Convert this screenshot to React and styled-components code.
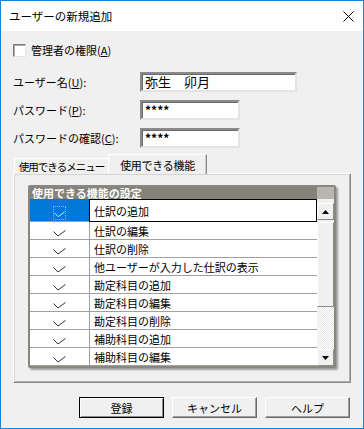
import styled, { createGlobalStyle } from "styled-components";

const GlobalStyle = createGlobalStyle`
  html, body {
    margin: 0;
    padding: 0;
    background: #ffffff;
  }
  * {
    box-sizing: border-box;
  }
`;

const FONT = `"Noto Sans CJK JP", "Noto Sans", sans-serif`;

const rows = [
  "仕訳の追加",
  "仕訳の編集",
  "仕訳の削除",
  "他ユーザーが入力した仕訳の表示",
  "勘定科目の追加",
  "勘定科目の編集",
  "勘定科目の削除",
  "補助科目の追加",
  "補助科目の編集",
];

const Window = styled.div`
  width: 364px;
  height: 429px;
  border: 1px solid #1883d7;
  display: flex;
  flex-direction: column;
  font-family: ${FONT};
  font-size: 11px;
  color: #000;
  background: #f0f0f0;
`;

const TitleBar = styled.div`
  height: 30px;
  background: #ffffff;
  display: flex;
  align-items: center;
  justify-content: space-between;
  padding: 0 8px 0 8px;
  font-size: 11.5px;
  flex-shrink: 0;
`;

const CloseIcon = styled.svg`
  width: 11px;
  height: 11px;
  margin-right: 1px;
`;

const Body = styled.div`
  flex: 1;
  display: flex;
  flex-direction: column;
  padding: 12px 12px 10px 12px;
`;

const CheckRow = styled.label`
  display: flex;
  align-items: center;
  height: 14px;
  gap: 5px;
  line-height: 14px;
`;

const CheckBox = styled.span`
  width: 13px;
  height: 13px;
  background: #fff;
  border: 1px solid;
  border-color: #7a7a7a #e3e3e3 #e3e3e3 #7a7a7a;
  box-shadow: inset 1px 1px 0 #a8a8a8;
`;

const Form = styled.div`
  display: flex;
  flex-direction: column;
  gap: 8px;
  margin-top: 15px;
`;

const FieldRow = styled.div`
  display: grid;
  grid-template-columns: 127px auto;
  align-items: center;
  height: 20px;
`;

const Label = styled.span`
  line-height: 14px;
`;

const TextBox = styled.div`
  width: ${({ $w }) => $w}px;
  height: 20px;
  background: #fff;
  border: 2px solid;
  border-color: #8a8a8a #e3e3e3 #e3e3e3 #8a8a8a;
  box-shadow: inset 1px 1px 0 #6a6a6a;
  padding: 0 3px;
  display: flex;
  align-items: center;
  font-size: ${({ $big }) => ($big ? "13px" : "12px")};
  font-weight: ${({ $big }) => ($big ? "normal" : "bold")};
  line-height: 14px;
  white-space: pre;
`;

const TabStrip = styled.div`
  display: flex;
  align-items: flex-end;
  height: 19px;
  margin-top: 7px;
  margin-bottom: -1px;
  padding-left: 1px;
  position: relative;
  z-index: 1;
`;

const Tab = styled.div`
  width: ${({ $active }) => ($active ? 99 : 95)}px;
  height: ${({ $active }) => ($active ? 20 : 16)}px;
  background: #f0f0f0;
  border: 1px solid;
  border-bottom: none;
  border-color: #ffffff #8a8a8a #f0f0f0 #ffffff;
  box-shadow: ${({ $active }) => ($active ? "inset -1px 0 0 #c8c8c8" : "none")};
  display: flex;
  align-items: center;
  justify-content: center;
  white-space: nowrap;
  line-height: 14px;
  font-size: ${({ $active }) => ($active ? "11px" : "10.5px")};
  letter-spacing: ${({ $active }) => ($active ? "-0.3px" : "-1px")};
  margin-left: ${({ $active }) => ($active ? "-1px" : "0")};
`;

const Panel = styled.div`
  height: 210px;
  border: 1px solid;
  border-color: #ffffff #8a8a8a #8a8a8a #ffffff;
  box-shadow: 1px 1px 0 #d4d4d4 inset, -1px -1px 0 #b0b0b0 inset;
  padding: 11px 14px 0 14px;
`;

const Grid = styled.div`
  width: 308px;
  height: 183px;
  border: 2px solid #8a8780;
  border-radius: 2px;
  box-shadow: 2px 2px 2px rgba(0, 0, 0, 0.35);
  display: grid;
  grid-template-columns: 1fr 17px;
  grid-template-rows: 12px 1fr;
  background: #fff;
  overflow: hidden;
`;

const Header = styled.div`
  background: #858279;
  color: #fff;
  font-weight: bold;
  font-size: 11px;
  line-height: 12px;
  padding-left: 2px;
`;

const HeaderCorner = styled.div`
  background: #b9b6af;
`;

const RowList = styled.div`
  display: flex;
  flex-direction: column;
`;

const Row = styled.div`
  display: grid;
  grid-template-columns: 59px 1fr;
  height: ${({ $first }) => ($first ? 23 : 18)}px;
  border-bottom: 1px solid #a0a0a0;
`;

const CheckCell = styled.div`
  background: ${({ $selected }) => ($selected ? "#0078d7" : "#fff")};
  display: flex;
  justify-content: center;
  align-items: flex-end;
  padding-bottom: ${({ $selected }) => ($selected ? 0 : 2)}px;
`;

const FocusRing = styled.div`
  border: 1px dotted #f0a040;
  padding: 4px 0 1px 0;
  width: 13px;
  display: flex;
  justify-content: center;
  margin-bottom: 1px;
`;

const TextCell = styled.div`
  border-left: 1px solid #a0a0a0;
  padding-left: 4px;
  display: flex;
  align-items: center;
  line-height: 14px;
  ${({ $selected }) =>
    $selected &&
    `
    border: 1px solid #000;
    margin-bottom: -1px;
  `}
`;

const ScrollBar = styled.div`
  display: flex;
  flex-direction: column;
  padding-top: 4px;
  background: #f0f0f0;
`;

const ScrollButton = styled.div`
  height: 17px;
  background: #f0f0f0;
  border: 1px solid;
  border-color: #ffffff #8a8a8a #8a8a8a #ffffff;
  display: flex;
  align-items: center;
  justify-content: center;
`;

const Thumb = styled.div`
  height: 85px;
  margin-top: 2px;
  background: #f0f0f0;
  border: 1px solid;
  border-color: #ffffff #8a8a8a #8a8a8a #ffffff;
`;

const Track = styled.div`
  flex: 1;
  background: repeating-conic-gradient(#ffffff 0 25%, #e6e6e6 0 50%) 0 0 / 2px 2px;
`;

const ButtonRow = styled.div`
  display: flex;
  justify-content: flex-end;
  gap: 8px;
  margin-top: 14px;
  padding-right: 1px;
`;

const Button = styled.button`
  width: 85px;
  height: 21px;
  font-family: ${FONT};
  font-size: 11px;
  line-height: 14px;
  color: #000;
  background: #f0f0f0;
  padding: 0;
  border: 1px solid;
  border-color: ${({ $default }) =>
    $default ? "#000" : "#ffffff #6a6a6a #6a6a6a #ffffff"};
  box-shadow: ${({ $default }) =>
    $default
      ? "inset 1px 1px 0 #ffffff, inset -1px -1px 0 #8a8a8a"
      : "inset -1px -1px 0 #a0a0a0"};
`;

const Check = ({ color }) => (
  <svg width="13" height="7" viewBox="0 0 13 7">
    <polyline points="0.5,1.5 5,6 12.5,0.5" fill="none" stroke={color} strokeWidth="1" />
  </svg>
);

const Arrow = ({ down }) => (
  <svg width="7" height="4" viewBox="0 0 7 4">
    <polygon points={down ? "0,0 7,0 3.5,4" : "3.5,0 7,4 0,4"} fill="#000" />
  </svg>
);

export default function App() {
  return (
    <>
      <GlobalStyle />
      <Window>
        <TitleBar>
          <span>ユーザーの新規追加</span>
          <CloseIcon viewBox="0 0 11 11">
            <path d="M0.5 0.5 L10.5 10.5 M10.5 0.5 L0.5 10.5" stroke="#000" strokeWidth="1" />
          </CloseIcon>
        </TitleBar>
        <Body>
          <CheckRow>
            <CheckBox />
            <span>
              管理者の権限(<u>A</u>)
            </span>
          </CheckRow>
          <Form>
            <FieldRow>
              <Label>
                ユーザー名(<u>U</u>):
              </Label>
              <TextBox $w={157} $big>
                弥生　卯月
              </TextBox>
            </FieldRow>
            <FieldRow>
              <Label>
                パスワード(<u>P</u>):
              </Label>
              <TextBox $w={100}>****</TextBox>
            </FieldRow>
            <FieldRow>
              <Label>
                パスワードの確認(<u>C</u>):
              </Label>
              <TextBox $w={100}>****</TextBox>
            </FieldRow>
          </Form>
          <TabStrip>
            <Tab>使用できるメニュー</Tab>
            <Tab $active>使用できる機能</Tab>
          </TabStrip>
          <Panel>
            <Grid>
              <Header>使用できる機能の設定</Header>
              <HeaderCorner />
              <RowList>
                {rows.map((name, i) => (
                  <Row key={name} $first={i === 0}>
                    <CheckCell $selected={i === 0}>
                      {i === 0 ? (
                        <FocusRing>
                          <Check color="#ffffff" />
                        </FocusRing>
                      ) : (
                        <Check color="#303030" />
                      )}
                    </CheckCell>
                    <TextCell $selected={i === 0}>{name}</TextCell>
                  </Row>
                ))}
              </RowList>
              <ScrollBar>
                <ScrollButton>
                  <Arrow />
                </ScrollButton>
                <Thumb />
                <Track />
                <ScrollButton>
                  <Arrow down />
                </ScrollButton>
              </ScrollBar>
            </Grid>
          </Panel>
          <ButtonRow>
            <Button $default>登録</Button>
            <Button>キャンセル</Button>
            <Button>ヘルプ</Button>
          </ButtonRow>
        </Body>
      </Window>
    </>
  );
}
